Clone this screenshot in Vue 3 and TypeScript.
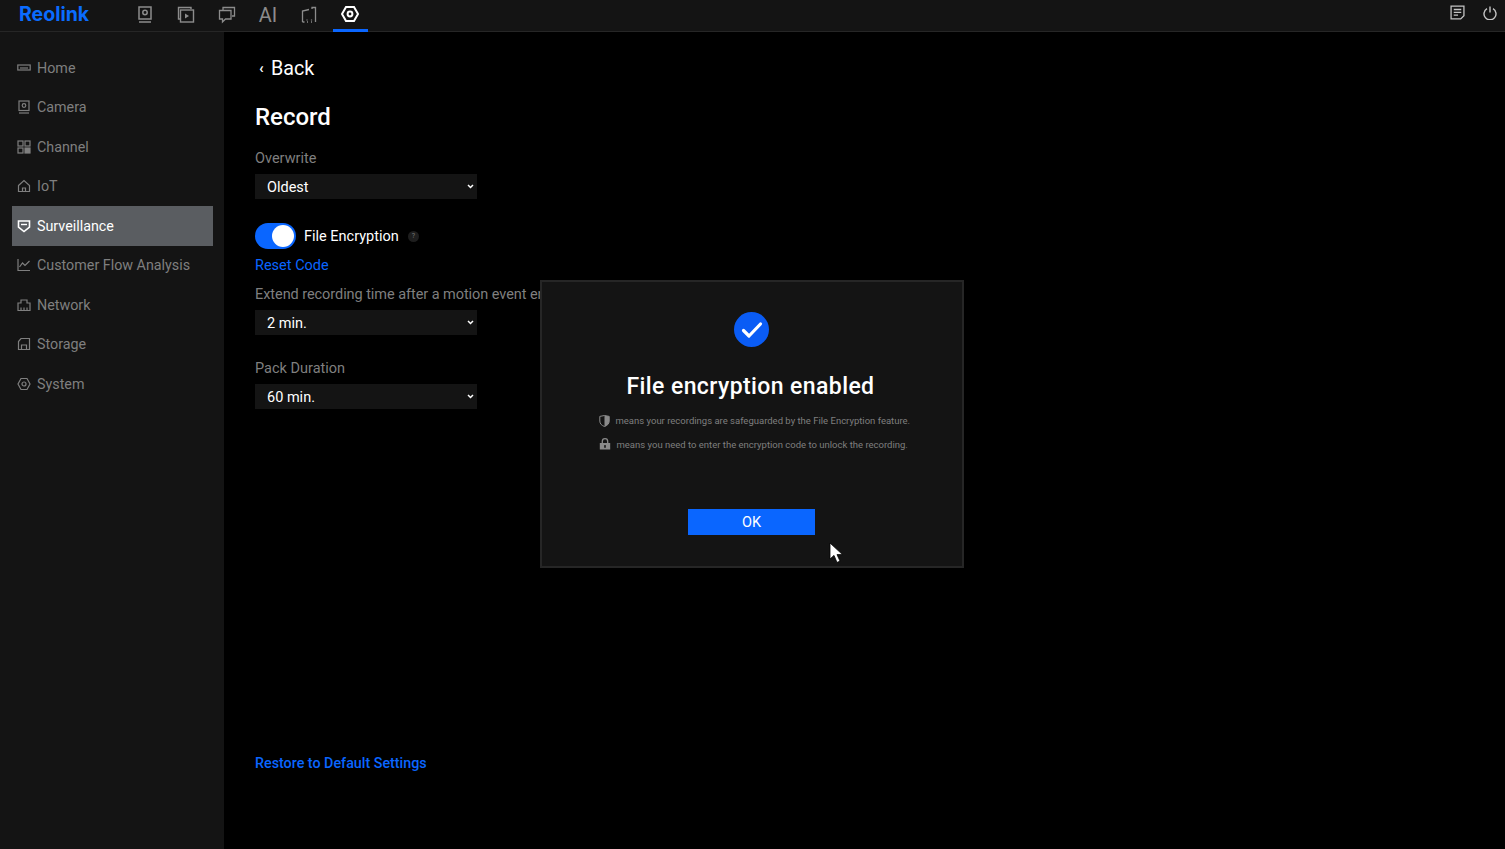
<script setup lang="ts">
const menu = [
  { label: 'Home', icon: 'home' },
  { label: 'Camera', icon: 'camera' },
  { label: 'Channel', icon: 'channel' },
  { label: 'IoT', icon: 'iot' },
  { label: 'Surveillance', icon: 'shield', active: true },
  { label: 'Customer Flow Analysis', icon: 'chart' },
  { label: 'Network', icon: 'network' },
  { label: 'Storage', icon: 'storage' },
  { label: 'System', icon: 'system' },
];

const selects = [
  { label: 'Overwrite', value: 'Oldest', options: ['Oldest'] },
];
</script>

<template>
  <div class="app">
    <header class="topbar">
      <div class="logo">Reolink</div>
      <nav class="tabs">
        <div class="tab">
          <svg width="16" height="18" viewBox="0 0 16 18" fill="none" stroke="currentColor" stroke-width="1.5">
            <rect x="2" y="1" width="12" height="12" />
            <circle cx="8" cy="6.5" r="2.2" />
            <path d="M2 16h12" />
          </svg>
        </div>
        <div class="tab">
          <svg width="18" height="18" viewBox="0 0 18 18" fill="none" stroke="currentColor" stroke-width="1.4">
            <path d="M14 3V1.5H1.5V13H3" />
            <rect x="3.5" y="4" width="13" height="12" />
            <path d="M8 7.5v5l4-2.5z" fill="currentColor" stroke="none" />
          </svg>
        </div>
        <div class="tab">
          <svg width="18" height="18" viewBox="0 0 18 18" fill="none" stroke="currentColor" stroke-width="1.3">
            <path d="M5 4V1.5h11.5V10H14" />
            <path d="M1.5 4.5H13V13H7.5L4.5 16v-3h-3z" />
          </svg>
        </div>
        <div class="tab ai">AI</div>
        <div class="tab">
          <svg width="16" height="18" viewBox="0 0 16 18" fill="none" stroke="currentColor" stroke-width="1.3">
            <path d="M1.5 16V5L8 3.5M11 3V1.5h3.5V16" />
            <path d="M1.5 16h2M6 16h1M10 16h1" />
            <path d="M6 14.5v-1M10.5 14.5v-1" />
          </svg>
        </div>
        <div class="tab active">
          <svg width="18" height="18" viewBox="0 0 18 18" fill="none" stroke="currentColor" stroke-width="2">
            <path d="M5 2h8l4 7-4 7H5L1 9z" />
            <circle cx="9" cy="9" r="2.4" />
          </svg>
        </div>
      </nav>
      <div class="top-right">
        <svg width="15" height="15" viewBox="0 0 14 14" fill="none" stroke="currentColor" stroke-width="1.2">
          <path d="M1 1h12v9l-3 3H1z" />
          <path d="M3.5 4.2h7M3.5 6.8h7M3.5 9.4h4" />
        </svg>
        <svg width="14" height="14" viewBox="0 0 14 14" fill="none" stroke="currentColor" stroke-width="1.4">
          <path d="M4 2.6a6 6 0 1 0 6 0" />
          <path d="M7 0.5v6" />
        </svg>
      </div>
    </header>

    <div class="body">
      <aside class="sidebar">
        <div v-for="item in menu" :key="item.label" class="menu-item" :class="{ active: item.active }">
          <svg class="menu-icon" width="14" height="14" viewBox="0 0 14 14" fill="none" stroke="currentColor" stroke-width="1.2">
            <template v-if="item.icon === 'home'">
              <rect x="0.8" y="4" width="12.4" height="5" />
              <path d="M3 7h8" />
            </template>
            <template v-else-if="item.icon === 'camera'">
              <rect x="2" y="1" width="10" height="9.5" />
              <circle cx="7" cy="5.5" r="1.8" />
              <path d="M2 13h10" />
            </template>
            <template v-else-if="item.icon === 'channel'">
              <rect x="1" y="1" width="5" height="5" />
              <rect x="8" y="1" width="5" height="5" />
              <rect x="1" y="8" width="5" height="5" />
              <rect x="8" y="8" width="5" height="5" fill="currentColor" />
            </template>
            <template v-else-if="item.icon === 'iot'">
              <path d="M1.5 6.5L7 1.5l5.5 5V12.5h-11z" />
              <path d="M5.5 12.5V9h3v3.5" />
            </template>
            <template v-else-if="item.icon === 'shield'">
              <path d="M1.5 2h11v6L7 12.5 1.5 8z" stroke-width="1.6" />
              <path d="M4 5.5h6" stroke-width="1.4" />
            </template>
            <template v-else-if="item.icon === 'chart'">
              <path d="M1 1v11.5h12" />
              <path d="M2.5 9l3-4 2.5 2.5L12.5 3" />
            </template>
            <template v-else-if="item.icon === 'network'">
              <path d="M1 12.5V5h3V2h6v3h3v7.5z" />
              <path d="M4 12.5V9.5M7 12.5V9.5M10 12.5V9.5" />
            </template>
            <template v-else-if="item.icon === 'storage'">
              <path d="M1.5 12.5V4.5L4 1.5h8.5v11z" />
              <path d="M4.5 12.5V8h5v4.5" />
            </template>
            <template v-else>
              <path d="M4 1.5h6L13 7l-3 5.5H4L1 7z" />
              <circle cx="7" cy="7" r="2" />
            </template>
          </svg>
          <span>{{ item.label }}</span>
        </div>
      </aside>

      <main class="content">
        <div class="back"><span class="chev">‹</span>Back</div>
        <h1 class="title">Record</h1>

        <div class="field-label first">{{ selects[0].label }}</div>
        <select class="select">
          <option v-for="o in selects[0].options" :key="o">{{ o }}</option>
        </select>

        <div class="toggle-row">
          <div class="toggle"><div class="knob"></div></div>
          <span class="toggle-label">File Encryption</span>
          <span class="help">?</span>
        </div>
        <a class="link reset">Reset Code</a>

        <div class="field-label extend">Extend recording time after a motion event ends</div>
        <select class="select">
          <option>2 min.</option>
        </select>

        <div class="field-label pack">Pack Duration</div>
        <select class="select">
          <option>60 min.</option>
        </select>

        <a class="link restore">Restore to Default Settings</a>
      </main>
    </div>

    <div class="dialog">
      <div class="check">
        <svg width="22" height="18" viewBox="0 0 22 18" fill="none" stroke="#fff" stroke-width="3.2" stroke-linecap="round" stroke-linejoin="round">
          <path d="M2.5 9.5L8 15 19.5 3" />
        </svg>
      </div>
      <h2 class="dialog-title">File encryption enabled</h2>
      <div class="note">
        <svg width="11" height="12" viewBox="0 0 11 12">
          <path d="M0.8 1.4L5.5 0.5l4.7 0.9V6c0 2.8-2 4.6-4.7 5.5C2.8 10.6 0.8 8.8 0.8 6z" fill="none" stroke="#8a8a8a" stroke-width="1" />
          <path d="M5.5 0.5l4.7 0.9V6c0 2.8-2 4.6-4.7 5.5z" fill="#8a8a8a" />
        </svg>
        <span>means your recordings are safeguarded by the File Encryption feature.</span>
      </div>
      <div class="note">
        <svg width="12" height="12" viewBox="0 0 12 12">
          <path d="M3.3 5.5V3.4a2.7 2.7 0 0 1 5.4 0v2.1" fill="none" stroke="#8a8a8a" stroke-width="1.3" />
          <path fill-rule="evenodd" d="M0.8 5h10.4v6.5H0.8zM6 7a1 1 0 0 0-0.6 1.8V10h1.2V8.8A1 1 0 0 0 6 7z" fill="#8a8a8a" />
        </svg>
        <span>means you need to enter the encryption code to unlock the recording.</span>
      </div>
      <button class="ok">OK</button>
    </div>

    <svg class="cursor" width="15" height="22" viewBox="0 0 15 22">
      <path d="M1 1v16l4-3.6L8 20.5l3-1.4-3-6.5h5.5z" fill="#fff" stroke="#000" stroke-width="0.8" />
    </svg>
  </div>
</template>

<style>
html,
body {
  margin: 0;
  background: #000;
}
</style>

<style scoped>
.app {
  position: relative;
  width: 1505px;
  height: 849px;
  overflow: hidden;
  display: flex;
  flex-direction: column;
  background: #000;
  color: #fff;
  font-family: Roboto, "Liberation Sans", sans-serif;
}

.topbar {
  flex: none;
  height: 31px;
  display: flex;
  align-items: stretch;
  background: #141414;
  border-bottom: 1px solid #262626;
}

.logo {
  width: 127.5px;
  padding-left: 19px;
  box-sizing: border-box;
  line-height: 29px;
  font-family: Inter, Roboto, sans-serif;
  font-size: 19.5px;
  font-weight: 700;
  color: #0a6cff;
}

.tabs {
  display: flex;
}

.tab {
  width: 35px;
  margin-right: 6px;
  height: 31px;
  box-sizing: border-box;
  display: flex;
  align-items: center;
  justify-content: center;
  color: #8c8c8c;
  padding-bottom: 2px;
}

.tab.ai {
  font-size: 20px;
  font-weight: 400;
}

.tab.active {
  color: #fff;
  border-bottom: 3px solid #0a66ff;
  height: 32px;
  padding-bottom: 1px;
}

.top-right {
  margin-left: auto;
  display: flex;
  align-items: center;
  gap: 18px;
  padding: 0 8px 6px 0;
  color: #c4c4c4;
}

.body {
  flex: 1;
  display: flex;
  min-height: 0;
}

.sidebar {
  flex: none;
  width: 224px;
  box-sizing: border-box;
  padding: 16px 11px 0 12px;
  background: #141414;
}

.menu-item {
  height: 39.5px;
  display: flex;
  align-items: center;
  gap: 6px;
  padding-left: 5px;
  font-size: 14.3px;
  color: #7f7f7f;
}

.menu-item.active {
  background: #5a5d61;
  color: #fff;
}

.menu-icon {
  flex: none;
}

.content {
  flex: 1;
  padding: 22px 0 0 31px;
}

.back {
  display: flex;
  align-items: center;
  height: 30px;
  font-size: 19.7px;
  line-height: 30px;
}

.chev {
  width: 16px;
  padding: 0 0 3px 4px;
  box-sizing: border-box;
  font-size: 15px;
  line-height: 24px;
  font-weight: 700;
}

.title {
  margin: 16px 0 0;
  font-size: 24px;
  line-height: 34px;
  font-weight: 500;
}

.field-label {
  font-size: 14.5px;
  line-height: 18px;
  color: #7f7f7f;
  white-space: nowrap;
}

.field-label.first {
  margin-top: 16px;
  margin-bottom: 6px;
}

.field-label.extend {
  margin-top: 11px;
  margin-bottom: 6px;
  letter-spacing: -0.06px;
}

.field-label.pack {
  margin-top: 25px;
  margin-bottom: 6px;
}

.select {
  display: block;
  width: 222px;
  height: 25px;
  box-sizing: border-box;
  padding: 2px 0 0 12px;
  border: none;
  border-radius: 0;
  outline: none;
  appearance: none;
  background-color: #141414;
  background-image: url("data:image/svg+xml,%3Csvg xmlns='http://www.w3.org/2000/svg' width='7' height='5' viewBox='0 0 7 5'%3E%3Cpath d='M1 1l2.5 2.5L6 1' fill='none' stroke='%23fff' stroke-width='1.5'/%3E%3C/svg%3E");
  background-repeat: no-repeat;
  background-position: right 3px center;
  color: #fff;
  font-family: Roboto, "Liberation Sans", sans-serif;
  font-size: 14.5px;
}

.toggle-row {
  display: flex;
  align-items: center;
  margin-top: 24px;
  height: 26px;
}

.toggle {
  width: 41px;
  height: 26px;
  border-radius: 13px;
  background: #0a66ff;
  position: relative;
}

.knob {
  position: absolute;
  top: 2px;
  right: 2px;
  width: 22px;
  height: 22px;
  border-radius: 50%;
  background: #fff;
}

.toggle-label {
  margin-left: 8px;
  font-size: 14.5px;
}

.help {
  margin-left: 9px;
  width: 11px;
  height: 11px;
  border-radius: 50%;
  background: #1e1e1e;
  color: #777;
  font-size: 7px;
  line-height: 11px;
  text-align: center;
}

.link {
  display: block;
  color: #0a66ff;
  font-size: 14.5px;
  line-height: 18px;
}

.reset {
  margin-top: 8px;
}

.restore {
  margin-top: 345px;
  font-size: 14.3px;
  font-weight: 500;
}

.dialog {
  position: absolute;
  left: 540px;
  top: 280px;
  width: 424px;
  height: 288px;
  box-sizing: border-box;
  padding-top: 30px;
  display: flex;
  flex-direction: column;
  align-items: center;
  background: #141414;
  border: 2px solid #262626;
}

.check {
  width: 35px;
  height: 35px;
  margin-right: 1px;
  border-radius: 50%;
  background: #0a5cf5;
  display: flex;
  align-items: center;
  justify-content: center;
}

.dialog-title {
  margin: 25px 3px 7px 0;
  font-size: 23px;
  line-height: 30px;
  font-weight: 500;
  letter-spacing: 0.4px;
}

.note {
  width: 313px;
  height: 23.5px;
  margin-left: 6px;
  display: flex;
  align-items: center;
  gap: 6px;
  font-size: 9.5px;
  color: #7f7f7f;
  white-space: nowrap;
}

.note svg {
  flex: none;
}

.ok {
  margin-top: 53px;
  width: 127px;
  height: 26px;
  margin-right: 1px;
  border: none;
  background: #0a66ff;
  color: #fff;
  font-family: inherit;
  font-size: 14.5px;
  font-weight: 400;
}

.cursor {
  position: absolute;
  left: 829px;
  top: 542px;
}
</style>
